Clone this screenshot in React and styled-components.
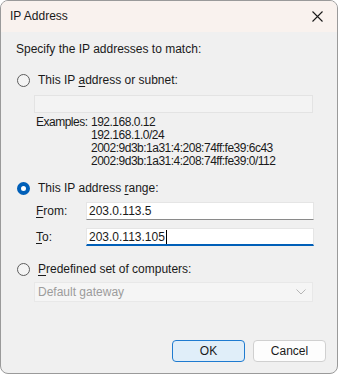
import React from "react";
import styled, { createGlobalStyle } from "styled-components";

const Global = createGlobalStyle`
  html, body {
    margin: 0;
    padding: 0;
    background: #ffffff;
  }
  body {
    font-family: "Liberation Sans", Arial, sans-serif;
    font-size: 12px;
    color: #1a1a1a;
  }
`;

const Window = styled.div`
  width: 336px;
  height: 372px;
  border: 1px solid #9a9a9a;
  border-radius: 8px;
  overflow: hidden;
  background: #f0f0f0;
  display: flex;
  flex-direction: column;
`;

const TitleBar = styled.div`
  height: 31px;
  background: #f9f2ee;
  display: flex;
  align-items: center;
  justify-content: space-between;
  padding: 0 8px 0 9px;
  flex-shrink: 0;
`;

const Title = styled.span`
  font-size: 12px;
  color: #1a1a1a;
  margin-top: -1px;
`;

const CloseBtn = styled.button`
  border: none;
  background: transparent;
  width: 24px;
  height: 24px;
  display: flex;
  align-items: center;
  justify-content: center;
  padding: 0;
  margin-top: -1px;
`;

const Body = styled.div`
  flex: 1;
  padding: 10px 24px 0 15px;
  display: flex;
  flex-direction: column;
`;

const Intro = styled.div`
  line-height: 14px;
`;

const RadioRow = styled.label`
  display: flex;
  align-items: center;
  gap: 8px;
  margin-top: ${(p) => p.$top}px;
  margin-left: 1px;
  height: 16px;
`;

const RadioDot = styled.span`
  width: 13px;
  height: 13px;
  border-radius: 50%;
  box-sizing: border-box;
  flex-shrink: 0;
  border: ${(p) => (p.$checked ? "4px solid #005fb8" : "1px solid #5d5d5d")};
  background: ${(p) => (p.$checked ? "#ffffff" : "#f4f4f4")};
`;

const Indent = styled.div`
  margin-left: 18px;
  display: flex;
  flex-direction: column;
`;

const DisabledInput = styled.div`
  height: 18px;
  box-sizing: border-box;
  border: 1px solid #e3e3e3;
  background: #f3f3f3;
  margin-top: ${(p) => p.$top}px;
`;

const Examples = styled.div`
  display: grid;
  grid-template-columns: 55px 1fr;
  margin-top: 3px;
  line-height: 13px;
  margin-left: 2px;
  letter-spacing: -0.5px;
`;

const ExampleValues = styled.div`
  display: flex;
  flex-direction: column;
`;

const FieldRow = styled.div`
  display: flex;
  align-items: center;
  margin-top: ${(p) => p.$top}px;
`;

const FieldLabel = styled.span`
  width: 50px;
  margin-left: 2px;
  flex-shrink: 0;
`;

const TextBox = styled.div`
  flex: 1;
  height: 18px;
  box-sizing: border-box;
  background: #ffffff;
  border: 1px solid #e5e5e5;
  border-bottom: ${(p) => (p.$focused ? "2px solid #005fb8" : "1px solid #8a8a8a")};
  padding: 0 0 0 2px;
  display: flex;
  align-items: center;
  color: #1a1a1a;
  margin-right: -1px;
`;

const Caret = styled.span`
  display: inline-block;
  width: 1px;
  height: 14px;
  background: #000;
  margin-left: 1px;
`;

const Combo = styled.div`
  height: 20px;
  box-sizing: border-box;
  border: 1px solid #e8e8e8;
  background: #f5f5f5;
  color: #9c9c9c;
  display: flex;
  align-items: center;
  justify-content: space-between;
  padding: 0 6px 0 3px;
  margin-top: 5px;
`;

const Footer = styled.div`
  margin-top: auto;
  display: flex;
  justify-content: flex-end;
  gap: 8px;
  padding: 0 11px 11px 0;
`;

const Button = styled.button`
  width: 73px;
  height: 22px;
  box-sizing: border-box;
  border-radius: 4px;
  font-family: inherit;
  font-size: 12px;
  color: #1a1a1a;
  padding: 0;
  border: 1px solid ${(p) => (p.$primary ? "#1f7bd0" : "#d0d0d0")};
  background: ${(p) => (p.$primary ? "#e0eef9" : "#fdfdfd")};
`;

const U = styled.span`
  text-decoration: underline;
  text-underline-offset: 2px;
`;

function Chevron() {
  return (
    <svg width="10" height="6" viewBox="0 0 10 6">
      <path d="M0.5 0.5 L5 5 L9.5 0.5" fill="none" stroke="#b5b5b5" strokeWidth="1" />
    </svg>
  );
}

function CloseIcon() {
  return (
    <svg width="11" height="11" viewBox="0 0 11 11">
      <path d="M0.5 0.5 L10.5 10.5 M10.5 0.5 L0.5 10.5" stroke="#1a1a1a" strokeWidth="1.1" />
    </svg>
  );
}

export default function App() {
  return (
    <>
      <Global />
      <Window>
        <TitleBar>
          <Title>IP Address</Title>
          <CloseBtn aria-label="Close">
            <CloseIcon />
          </CloseBtn>
        </TitleBar>
        <Body>
          <Intro>Specify the IP addresses to match:</Intro>

          <RadioRow $top={16}>
            <RadioDot />
            <span>
              This IP <U>a</U>ddress or subnet:
            </span>
          </RadioRow>
          <Indent>
            <DisabledInput $top={7} />
            <Examples>
              <span>Examples:</span>
              <ExampleValues>
                <span>192.168.0.12</span>
                <span>192.168.1.0/24</span>
                <span>2002:9d3b:1a31:4:208:74ff:fe39:6c43</span>
                <span>2002:9d3b:1a31:4:208:74ff:fe39:0/112</span>
              </ExampleValues>
            </Examples>
          </Indent>

          <RadioRow $top={12}>
            <RadioDot $checked />
            <span>
              This IP address <U>r</U>ange:
            </span>
          </RadioRow>
          <Indent>
            <FieldRow $top={6}>
              <FieldLabel>
                <U>F</U>rom:
              </FieldLabel>
              <TextBox>203.0.113.5</TextBox>
            </FieldRow>
            <FieldRow $top={8}>
              <FieldLabel>
                <U>T</U>o:
              </FieldLabel>
              <TextBox $focused>
                203.0.113.105
                <Caret />
              </TextBox>
            </FieldRow>
          </Indent>

          <RadioRow $top={15}>
            <RadioDot />
            <span>
              <U>P</U>redefined set of computers:
            </span>
          </RadioRow>
          <Indent>
            <Combo>
              <span>Default gateway</span>
              <Chevron />
            </Combo>
          </Indent>
        </Body>
        <Footer>
          <Button $primary>OK</Button>
          <Button>Cancel</Button>
        </Footer>
      </Window>
    </>
  );
}
